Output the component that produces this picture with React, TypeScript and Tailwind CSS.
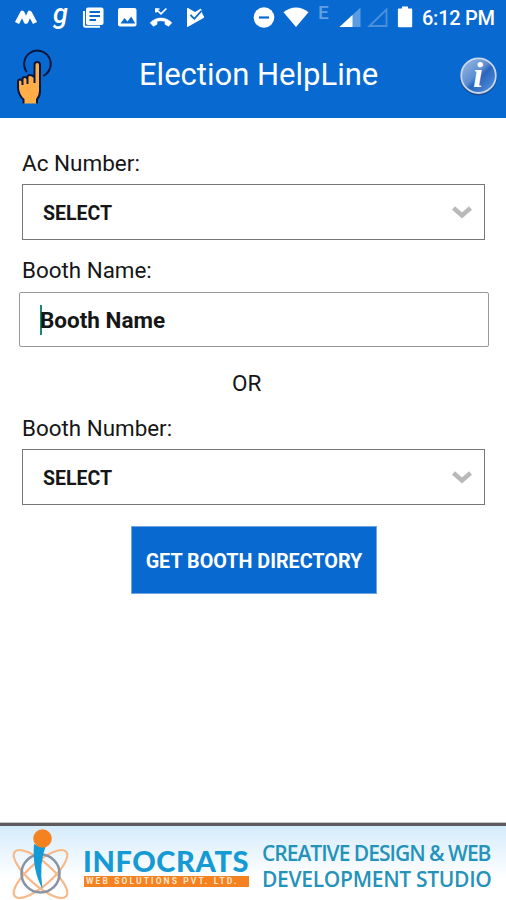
function StatusBar() {
  return (
    <div className="flex h-[36px] items-start text-white">
      <svg className="ml-[14px] mt-[6px] h-6 w-6" viewBox="14 6 24 24">
        <path
          d="M17 23 L22.300 13 L26 21.500 L29.700 13 L35 23"
          fill="none"
          stroke="#fff"
          strokeWidth="4.6"
          strokeLinejoin="round"
        />
      </svg>
      <span className="ml-[15px] mt-[1px] w-[15px] text-[27px] leading-[26px] font-medium italic font-[Roboto,sans-serif]">
        g
      </span>
      <svg className="ml-[14px] mt-[6px] h-[24px] w-[24px]" viewBox="82 6 24 24">
        <path d="M88 7.500h13.500a2 2 0 0 1 2 2v13.500a2 2 0 0 1-2 2H88a2 2 0 0 1-2-2V9.500a2 2 0 0 1 2-2z" fill="#fff" />
        <path d="M89.500 12h10.500M89.500 16h10.500M89.500 20h6.500" stroke="#0869d0" strokeWidth="1.800" />
        <path d="M84 11v14.500a1.200 1.200 0 0 0 1.200 1.200H100" fill="none" stroke="#fff" strokeWidth="2.100" />
      </svg>
      <svg className="ml-[10px] mt-[6px] h-[24px] w-[22px]" viewBox="116 6 22 24">
        <rect x="118" y="8" width="18.500" height="18.500" rx="2" fill="#fff" />
        <path d="M120.500 23.500l4-5.500 3 3.500 3.700-5 4 7z" fill="#0869d0" />
      </svg>
      <svg className="ml-[10px] mt-[6px] h-[24px] w-[26px]" viewBox="148 6 26 24">
        <path
          d="M150.200 22.800C156 16.500 166 16.500 171.800 22.800L168.600 26.300L165 24.300V21.300C162.300 20.600 159.700 20.600 157 21.300V24.300L153.400 26.300Z"
          fill="#fff"
          stroke="#fff"
          strokeWidth="0.6"
          strokeLinejoin="round"
        />
        <path d="M155.900 12.500V9h3.600M156.200 9.300l4.800 4.500 5.400-5.300" fill="none" stroke="#fff" strokeWidth="1.700" />
      </svg>
      <svg className="ml-[10px] mt-[6px] h-[24px] w-[24px]" viewBox="184 6 24 24">
        <path d="M187 8.500q0-.8 1-.5l7 4 6-3.500 1.500 5.500 1.500 2.500q.5 1-.5 1.600l-15.500 8.700q-1 .4-1-.6z" fill="#fff" />
        <path d="M190.500 15l3.800 3.800 7.200-8" fill="none" stroke="#0869d0" strokeWidth="1.800" />
      </svg>

      <svg className="ml-[44px] mt-[6px] h-[24px] w-[24px]" viewBox="252 6 24 24">
        <circle cx="264" cy="17.500" r="10.300" fill="#fff" />
        <path d="M259 17.500h10" stroke="#0869d0" strokeWidth="2.200" />
      </svg>
      <svg className="ml-[6px] mt-[6px] h-[24px] w-[28px]" viewBox="282 6 28 24">
        <path d="M283.500 12.200C291 5.900 301 5.900 308.500 12.200L296 27z" fill="#fff" />
      </svg>
      <span className="ml-[8px] mt-[3px] w-[12px] text-[19px] leading-5 font-medium text-[#62a0e3] font-[Roboto,sans-serif]">
        E
      </span>
      <svg className="ml-[8px] mt-[6px] h-[24px] w-[24px]" viewBox="338 6 24 24">
        <path d="M339.500 27L360.500 7.500V27z" fill="#5a9be1" />
        <path d="M339.500 27L352.500 15V27z" fill="#fff" />
      </svg>
      <svg className="ml-[4px] mt-[6px] h-[24px] w-[24px]" viewBox="366 6 24 24">
        <path d="M369.500 26L386.500 9.500V26z" fill="none" stroke="#4b90dc" strokeWidth="1.800" />
      </svg>
      <svg className="ml-[6px] mt-[5px] h-[24px] w-[18px]" viewBox="396 5 18 24">
        <path d="M402 6.500h6v2h3.500q.7 0 .7.800v17q0 .9-.9.900h-12.500q-.9 0-.9-.9v-17q0-.8.800-.8H402z" fill="#fff" />
      </svg>
      <span className="ml-[8px] mt-[6px] whitespace-nowrap text-[20px] leading-6 font-medium tracking-[-0.25px] font-[Roboto,sans-serif]">
        6:12 PM
      </span>
    </div>
  );
}

function TapIcon() {
  return (
    <svg className="ml-[14px] h-[60px] w-[40px]" viewBox="14 45 40 60">
      <path d="M26.500 70.500A13.300 13.300 0 1 1 44 74.500" fill="none" stroke="#0c1740" strokeWidth="2" strokeLinecap="round" />
      <path
        d="M23.500 102.500V98.500Q18.500 94 18 87V80.500Q18 78.500 20 78.500Q22 78.500 22.500 80.500V78Q22.500 76 24.500 76Q27 76 27.500 78V76Q27.500 74 29.700 74Q32 74 32.500 76.500L34.500 76V64Q34.500 61 37.200 61Q40 61 40 64V90Q40 95 37 98.500V102.500Z"
        fill="#ffad46"
      />
      <path
        d="M23.500 102.500V98.500Q18.500 94 18 87V80.500Q18 78.500 20 78.500Q22.500 78.500 22.500 81V84M22.500 80V78Q22.500 76 25 76Q27.500 76 27.500 79V83M27.500 78V76Q27.500 74 30 74Q32.500 74 34.500 76V82M34.500 80V64Q34.500 61 37.200 61Q40 61 40 64V90Q40 95 37 98.500V102.500"
        fill="none"
        stroke="#0c1740"
        strokeWidth="2"
        strokeLinejoin="round"
      />
    </svg>
  );
}

function InfoIcon() {
  return (
    <svg className="mr-[8px] h-[40px] w-[40px]" viewBox="458 56 40 40">
      <defs>
        <linearGradient id="info" x1="0" y1="0" x2="1" y2="1">
          <stop offset="0" stopColor="#a3bfe3" />
          <stop offset="0.45" stopColor="#5c8dd2" />
          <stop offset="0.55" stopColor="#2965bd" />
          <stop offset="1" stopColor="#5b9ae4" />
        </linearGradient>
      </defs>
      <circle cx="478.500" cy="77" r="18.500" fill="#1c4a8c" />
      <circle cx="478.500" cy="75.700" r="17.300" fill="url(#info)" stroke="#c8d6e9" strokeWidth="1.800" />
      <text
        x="478"
        y="87"
        textAnchor="middle"
        fontFamily="'Liberation Serif', serif"
        fontSize="36"
        fontWeight="bold"
        fontStyle="italic"
        fill="#fff"
      >
        i
      </text>
    </svg>
  );
}

function Select() {
  return (
    <div className="mr-[21px] ml-[22px] flex h-[56px] items-center justify-between border border-[#777] pr-[11px] pl-[20px]">
      <span className="pt-[3px] text-[19.5px] leading-6 font-bold">SELECT</span>
      <svg className="h-[16px] w-[22px]" viewBox="0 0 22 16">
        <path d="M2.500 4L11 11.500L19.500 4" fill="none" stroke="#b9b9b9" strokeWidth="4.500" />
      </svg>
    </div>
  );
}

function Banner() {
  return (
    <div className="flex h-[77px] border-t-[3px] border-[#5d5b5e] bg-linear-to-b from-[#d5ebfb] to-white to-70%">
      <svg className="ml-[10px] h-[74px] w-[62px]" viewBox="10 826 62 74">
        <g fill="none" stroke="#f8b98a" strokeWidth="2.200">
          <ellipse cx="40.500" cy="874" rx="34" ry="11.500" transform="rotate(41 40.500 874)" />
          <ellipse cx="40.500" cy="874" rx="34" ry="11.500" transform="rotate(-41 40.500 874)" />
        </g>
        <circle cx="40.500" cy="873.500" r="19" fill="none" stroke="#8794a5" strokeWidth="2.500" />
        <path d="M34 844Q40 848 46.500 844Q38.500 863 42.500 889Q32 870 34 844z" fill="#149bd7" />
        <circle cx="42.500" cy="838.500" r="9.300" fill="#f58220" />
      </svg>
      <div className="ml-[11px] mt-[19px] w-[167px]">
        <div className="h-[31px] whitespace-nowrap text-[29px] leading-[31px] font-black tracking-[0.6px] text-[#159ad3] font-[Lato,sans-serif]">
          INFOCRATS
        </div>
        <div className="ml-px h-[11px] w-[165px] whitespace-nowrap bg-[#f58220] pl-[2px] text-[8.5px] leading-[11px] font-bold tracking-[2.1px] text-[#ffe3ca]">
          WEB SOLUTIONS PVT. LTD.
        </div>
      </div>
      <div className="ml-[12px] mt-[14px] whitespace-nowrap text-[21px] leading-[26px] font-semibold text-[#2593b9] font-['Open_Sans',sans-serif]">
        <p className="tracking-[-1px]">CREATIVE DESIGN &amp; WEB</p>
        <p className="tracking-[-0.3px]">DEVELOPMENT STUDIO</p>
      </div>
    </div>
  );
}

export default function App() {
  return (
    <main className="flex h-[900px] w-[506px] flex-col overflow-hidden bg-white text-[#161616] font-[Roboto,sans-serif]">
      <header className="h-[118px] bg-[#0869d0]">
        <StatusBar />
        <div className="flex h-[80px] items-center">
          <TapIcon />
          <h1 className="-mt-[2px] mr-auto ml-[85px] text-[31px] leading-9 text-white">Election HelpLine</h1>
          <InfoIcon />
        </div>
      </header>

      <section className="flex flex-col pt-[31px]">
        <label className="ml-[22px] h-[35px] text-[22.5px] leading-[28px]">Ac Number:</label>
        <Select />
        <label className="mt-[16px] ml-[22px] h-[36px] text-[22.4px] leading-[28px]">Booth Name:</label>
        <div className="mr-[17px] ml-[19px] flex h-[55px] items-center rounded-[2px] border border-[#999] pl-[20px]">
          <span className="h-[30px] w-[2px] bg-[#16897a]" />
          <span className="-ml-[2px] text-[22.5px] leading-7 font-bold">Booth Name</span>
        </div>
        <p className="mt-[22px] ml-[232px] text-[22.5px] leading-[28px]">OR</p>
        <label className="mt-[17px] ml-[22px] h-[35px] text-[22.4px] leading-[28px]">Booth Number:</label>
        <Select />
        <button className="mt-[21px] ml-[131px] h-[68px] w-[246px] border border-[#6fa5e2] bg-[#0869d0] pt-[3px] text-[19.8px] font-bold tracking-[-0.02px] whitespace-nowrap text-white">
          GET BOOTH DIRECTORY
        </button>
      </section>

      <footer className="mt-auto">
        <div className="h-px bg-[#c4c4c4]" />
        <Banner />
      </footer>
    </main>
  );
}
